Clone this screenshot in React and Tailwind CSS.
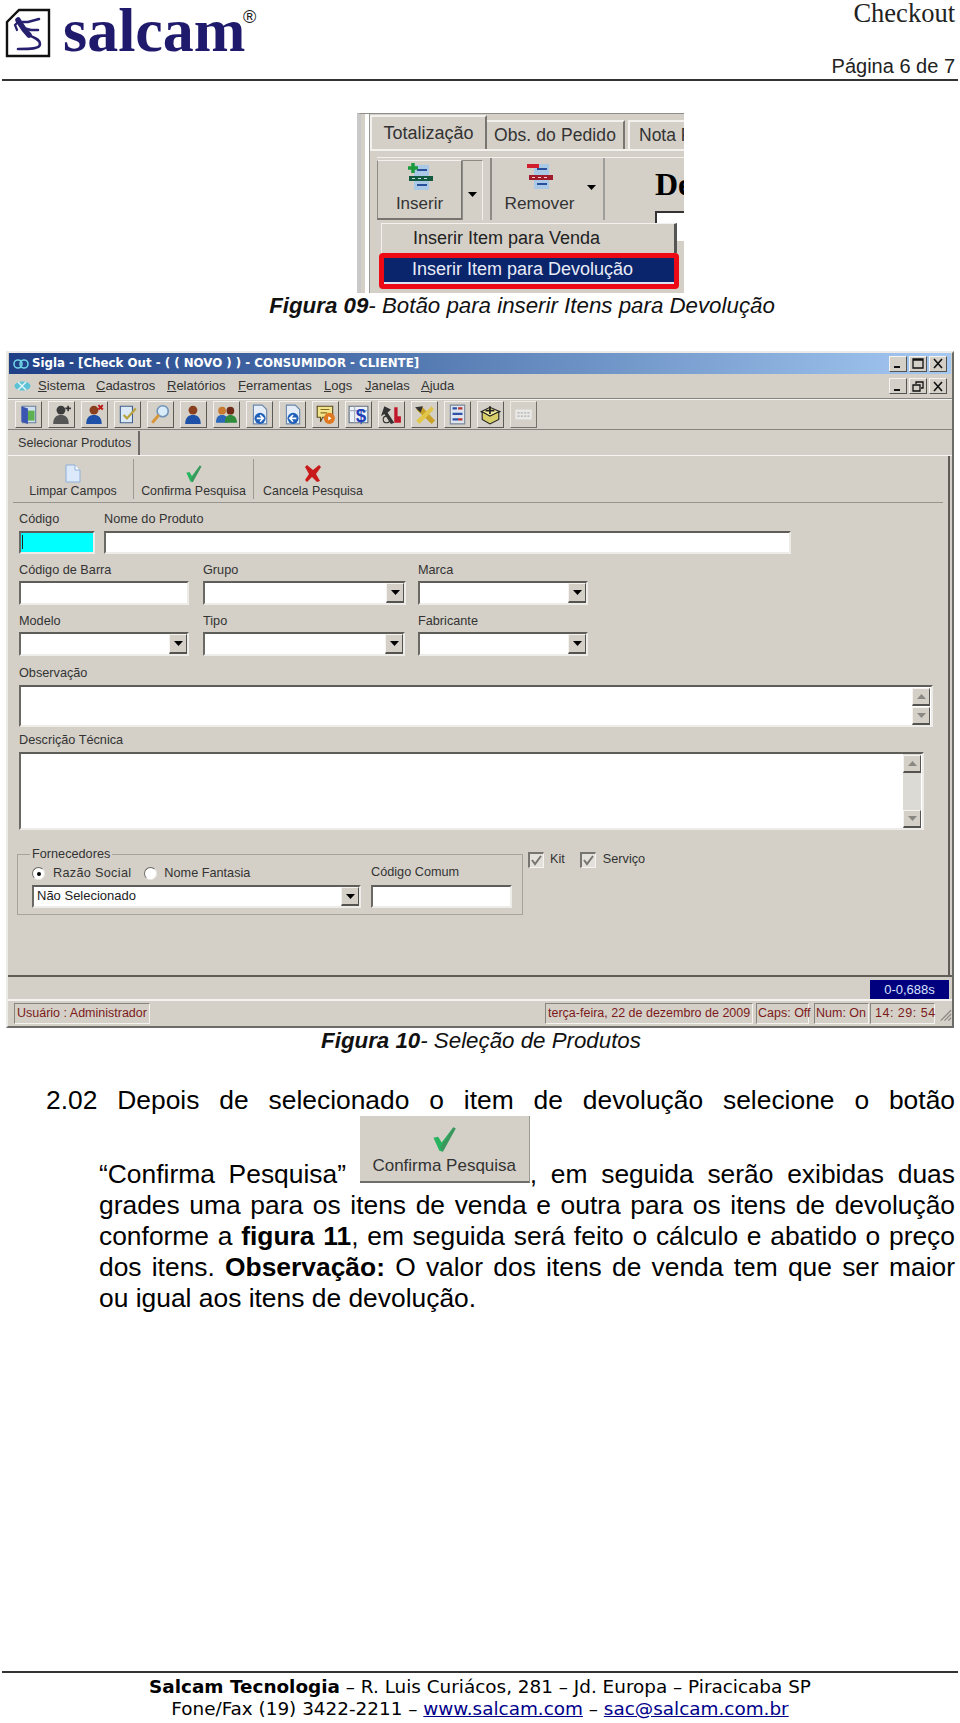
import React from 'react';

const ui = "font-['Liberation_Sans',sans-serif]";

// sunken win32 field
const Field = ({ className = '', children }) => (
  <div className={`flex bg-white border-t-2 border-l-2 border-t-[#5f5d58] border-l-[#6b6964] border-r-2 border-b-2 border-r-[#eeece8] border-b-[#eeece8] ${className}`}>
    {children}
  </div>
);

const Arrow = ({ up, color = '#000' }) => (
  <svg width="9" height="5" viewBox="0 0 9 5">
    <path d={up ? 'M4.5 0L9 5H0z' : 'M0 0h9L4.5 5z'} fill={color} />
  </svg>
);

const SmallBtn = ({ className = '', up, color }) => (
  <div className={`flex items-center justify-center bg-[#d4d0c8] border border-t-[#f4f3f0] border-l-[#f4f3f0] border-r-[#55534f] border-b-[#55534f] border-b-2 ${className}`}>
    <Arrow up={up} color={color} />
  </div>
);

const Combo = ({ className = '', text }) => (
  <Field className={`justify-between items-stretch ${className}`}>
    <span className="pl-[3px] text-[13px] leading-[18px] text-[#222]">{text}</span>
    <SmallBtn className="w-[18px]" />
  </Field>
);

const Label = ({ className = '', children }) => (
  <div className={`text-[12.7px] leading-[15px] text-[#333] ${className}`}>{children}</div>
);

const Caption = ({ bold, rest, className = '' }) => (
  <p className={`text-center text-[22.3px] leading-[24px] italic text-[#111] ${className}`}>
    <b>{bold}</b>
    {rest}
  </p>
);

const Logo = () => (
  <div className="flex items-start">
    <svg width="46" height="50" viewBox="0 0 46 50" className="mt-[8px] ml-[5px]">
      <path d="M14 2H44V48H2V14z" fill="#fff" stroke="#111" strokeWidth="2.4" />
      <g fill="none" stroke="#26206f" strokeLinecap="round">
        <path d="M13 12C16 17 18 21 24 27" strokeWidth="5.5" />
        <path d="M24 27C29 30 35 31 35 36C35 41 25 41 13 41" strokeWidth="2.6" />
        <path d="M14 14L23 14L34 11" strokeWidth="2.6" />
        <path d="M18 20L26 22L33 22" strokeWidth="2.6" />
        <path d="M13 14L10 17L12 22" strokeWidth="2.2" />
      </g>
    </svg>
    <div className="relative ml-[12px] mt-[-1px] font-['Liberation_Serif',serif] font-bold text-[62px] leading-[62px] text-[#1f1a6c]">
      salcam
      <span className="absolute left-[180px] top-[9px] font-['Liberation_Sans',sans-serif] font-normal text-[18px] leading-[18px] text-[#222]">®</span>
    </div>
  </div>
);

const ToolIcon = ({ children, disabled }) => (
  <div className={`flex items-center justify-center w-[27px] h-[27px] bg-[#d4d0c8] border border-t-[#f2f1ed] border-l-[#f2f1ed] border-r-[#5c5a55] border-b-[#5c5a55] ${disabled ? 'opacity-80' : ''}`}>
    <svg width="21" height="21" viewBox="0 0 19 19">{children}</svg>
  </div>
);

const person = (a, b) => (
  <>
    <circle cx="9" cy="5.5" r="4" fill={a} />
    <path d="M2 18c0-6 3-8 7-8s7 2 7 8z" fill={b} />
  </>
);

const toolIcons = [
  <><path d="M4 2h12v15H4z" fill="#cfe0ee" stroke="#6a7f9c" /><path d="M9 6h6v9H9z" fill="#5fb04f" /><path d="M3 2l6 2v14l-6-2z" fill="#3a56b0" /></>,
  <>{person('#3c3c3c', '#555')}<path d="M13 4h5M15.5 1.5v5" stroke="#333" strokeWidth="1.5" /></>,
  <>{person('#8a3f1e', '#1f50a8')}<path d="M13 1l4 4M17 1l-4 4" stroke="#c01818" strokeWidth="1.8" /></>,
  <><path d="M3 2h11v15H3z" fill="#dbe8f5" stroke="#41608f" /><path d="M6 10l3 3 8-9" fill="none" stroke="#b7a23b" strokeWidth="2" /></>,
  <><circle cx="11.5" cy="6.5" r="5" fill="#d9ecfa" stroke="#6f93b8" strokeWidth="1.4" /><path d="M8 10l-6 7" stroke="#d8963a" strokeWidth="2.6" /></>,
  <>{person('#8a3f1e', '#1f50a8')}</>,
  <><circle cx="5.5" cy="6" r="3.5" fill="#c87a30" /><path d="M0 17c0-5 2-7 5.5-7S11 12 11 17z" fill="#2b66b8" /><circle cx="13" cy="6" r="3.5" fill="#6e2c18" /><path d="M8 17c0-5 2-7 5-7s6 2 6 7z" fill="#2f8a3c" /></>,
  <><path d="M4 1h8l4 4v13H4z" fill="#e5eef8" stroke="#6a87aa" /><circle cx="10" cy="13" r="5" fill="#1f5fb8" /><path d="M7 13h6M10 10l3 3-3 3" stroke="#fff" strokeWidth="1.4" fill="none" /></>,
  <><path d="M4 1h8l4 4v13H4z" fill="#e5eef8" stroke="#6a87aa" /><circle cx="10" cy="13" r="5" fill="#1f5fb8" /><path d="M13 13H7M10 10l-3 3 3 3" stroke="#fff" strokeWidth="1.4" fill="none" /></>,
  <><path d="M2 2h14v10H7l-2 4v-4H2z" fill="#f2e48a" stroke="#5a4a20" /><path d="M5 5h8M5 8h6" stroke="#8a6a20" /><circle cx="13" cy="13" r="5" fill="#e07820" /><path d="M12 11l3 2-3 2z" fill="#fff" /></>,
  <><path d="M1 2h17v15H1z" fill="#eef2f6" stroke="#5f6f80" /><path d="M1 6h17M6 2v15" stroke="#9fb0c0" /><text x="7" y="16" fontSize="17" fontWeight="700" fill="#2040b8" fontFamily="Liberation Sans">$</text></>,
  <><path d="M3 2l6 3-3 3 6 9-3 1-6-9-3 2z" fill="#333" /><path d="M12 3h3v8h3v6h-6z" fill="#c0182a" /><circle cx="5" cy="14" r="3" fill="none" stroke="#333" /></>,
  <><path d="M2 5l5-3 12 13-3 3z" fill="#c9a227" /><path d="M16 2l2 3L5 18l-3-3z" fill="#e2c64a" /><path d="M1 3l7-1-2 6z" fill="#333" /></>,
  <><path d="M3 1h13v17H3z" fill="#dfe5ee" stroke="#7a8798" /><path d="M5 4h4M5 9h9M5 14h5" stroke="#2d52a8" strokeWidth="2" /><path d="M10 4h4M10 14h4" stroke="#b53030" strokeWidth="2" /></>,
  <><path d="M1 7l8-4 9 4-9 4z" fill="#f2eb9a" stroke="#222" /><path d="M2 7v7l7 4 8-4V7l-8 4z" fill="#d8cf6a" stroke="#222" /><path d="M9 2v7M5 6h8" stroke="#222" strokeWidth="1.6" /></>,
];

const Check = ({ size = 24 }) => (
  <svg width={size} height={size} viewBox="0 0 24 24">
    <path d="M3 11l4-1 3 5L20 2l2 1-11 20-3-1z" fill="#27b35f" />
    <path d="M9 19L20 2l2 1-11 20z" fill="#4f7f5c" opacity=".55" />
  </svg>
);

const Checkbox = () => (
  <div className="flex items-center justify-center w-[16px] h-[16px] bg-[#e4e1dc] border-t-2 border-l-2 border-t-[#77756f] border-l-[#77756f] border-r border-b border-r-[#f4f3f0] border-b-[#f4f3f0]">
    <svg width="11" height="11" viewBox="0 0 11 11"><path d="M1 5l3 4 6-8" fill="none" stroke="#77756f" strokeWidth="2" /></svg>
  </div>
);

const Radio = ({ on }) => (
  <div className="flex items-center justify-center w-[13px] h-[13px] rounded-full bg-white border border-t-[#6a6864] border-l-[#6a6864] border-r-[#eceae6] border-b-[#eceae6]">
    {on && <div className="w-[4px] h-[4px] rounded-full bg-black" />}
  </div>
);

const StatusCell = ({ className = '', children }) => (
  <div className={`flex items-center h-[21px] border-l border-t border-l-[#87857f] border-t-[#87857f] border-r border-b border-r-[#f4f3f0] border-b-[#f4f3f0] text-[12.5px] leading-[15px] text-[#7c1a1a] whitespace-nowrap ${className}`}>
    {children}
  </div>
);

const WinBtn = ({ children }) => (
  <div className="flex items-center justify-center w-[18px] h-[16px] bg-[#d4d0c8] border border-t-[#f4f3f0] border-l-[#f4f3f0] border-r-[#55534f] border-b-[#55534f]">
    <svg width="12" height="11" viewBox="0 0 12 11" fill="none" stroke="#111" strokeWidth="1.3">{children}</svg>
  </div>
);

const ActionBtn = ({ width, icon, text, sep = true }) => (
  <div className={`flex flex-col items-center justify-end h-[40px] ${width} ${sep ? 'border-r border-r-[#9c9a94]' : ''}`}>
    {icon}
    <span className="text-[12.4px] leading-[15px] text-[#333] mt-[1px] whitespace-nowrap">{text}</span>
  </div>
);

const SiglaWindow = () => (
  <div className={`${ui} ml-[6px] h-[677px] w-[948px] flex flex-col bg-[#d4d0c8] border-2 border-t-[#ecebe7] border-l-[#ecebe7] border-r-[#6d6b67] border-b-[#6d6b67]`}>
    {/* title */}
    <div className="h-[21px] mx-px flex items-center justify-between bg-gradient-to-r from-[#1f3f86] via-[#5d83b9] to-[#a5c9f2] pl-[4px] pr-[4px]">
      <div className="flex items-center gap-[3px]">
        <svg width="16" height="10" viewBox="0 0 16 10" fill="none" stroke="#6fd2e6" strokeWidth="1.6"><ellipse cx="5" cy="5" rx="4" ry="4" /><ellipse cx="11" cy="5" rx="4" ry="4" /></svg>
        <span className="font-['DejaVu_Sans',sans-serif] font-bold text-[11.8px] text-white whitespace-nowrap">Sigla - [Check Out -  ( ( NOVO ) )  - CONSUMIDOR - CLIENTE]</span>
      </div>
      <div className="flex gap-[2px]">
        <WinBtn><path d="M2 9h6" strokeWidth="2" /></WinBtn>
        <WinBtn><path d="M1 1h10v9H1zM1 2h10" /></WinBtn>
        <WinBtn><path d="M2 1l8 9M10 1l-8 9" strokeWidth="1.6" /></WinBtn>
      </div>
    </div>
    {/* menu */}
    <div className="h-[25px] flex items-center justify-between pl-[6px] pr-[5px] border-b border-b-[#85837e]">
      <div className="flex items-center text-[13px] text-[#333]">
        <svg width="17" height="10" viewBox="0 0 17 10" className="mr-[7px]"><ellipse cx="8.5" cy="5" rx="8" ry="4.5" fill="#5cc3d6" /><path d="M4 1l8 8M12 1L4 9" stroke="#e5f5f7" strokeWidth="1.5" /></svg>
        <span className="w-[58px]"><u>S</u>istema</span>
        <span className="w-[71px]"><u>C</u>adastros</span>
        <span className="w-[71px]"><u>R</u>elatórios</span>
        <span className="w-[86px]"><u>F</u>erramentas</span>
        <span className="w-[41px]"><u>L</u>ogs</span>
        <span className="w-[56px]"><u>J</u>anelas</span>
        <span><u>A</u>juda</span>
      </div>
      <div className="flex gap-[2px]">
        <WinBtn><path d="M2 9h6" strokeWidth="2" /></WinBtn>
        <WinBtn><path d="M1 4h7v6H1zM4 3V1h7v6H9" /></WinBtn>
        <WinBtn><path d="M2 1l8 9M10 1l-8 9" strokeWidth="1.6" /></WinBtn>
      </div>
    </div>
    {/* toolbar */}
    <div className="h-[31px] flex items-center gap-[6px] pl-[7px] border-t border-t-[#f4f3f0] border-b border-b-[#85837e]">
      {toolIcons.map((icon, i) => <ToolIcon key={i}>{icon}</ToolIcon>)}
      <ToolIcon disabled><path d="M2 5h15v9H2z" fill="#eee" /><path d="M4 8h11M4 11h11" stroke="#aaa" strokeDasharray="2 1" /></ToolIcon>
    </div>
    {/* tab */}
    <div className="h-[26px] flex items-end border-b border-b-[#f6f5f2]">
      <div className="w-[131px] h-[24px] ml-px flex items-center pl-[9px] border-r-2 border-r-[#6d6b67] text-[12.6px] text-[#333] whitespace-nowrap">Selecionar Produtos</div>
    </div>
    {/* panel */}
    <div className="flex-1 flex flex-col mr-[2px] border-r-2 border-r-[#5f5d58]">
      <div className="mx-[5px] h-[47px] flex items-end pb-[3px] border-b border-b-[#96948e]">
        <ActionBtn width="w-[121px]" icon={
          <svg width="16" height="19" viewBox="0 0 16 19"><path d="M1 1h9l5 5v12H1z" fill="#dbe9fa" stroke="#8fb0d8" /><path d="M10 1v5h5" fill="#fff" stroke="#8fb0d8" /></svg>
        } text="Limpar Campos" />
        <ActionBtn width="w-[120px]" icon={<Check size={19} />} text="Confirma Pesquisa" />
        <ActionBtn width="w-[118px]" sep={false} icon={
          <svg width="18" height="19" viewBox="0 0 18 19"><path d="M3 1l6 5 6-5 2 2-5 7 4 7-3 1-5-5-5 5-2-2 4-6-4-7z" fill="#c81a1a" /></svg>
        } text="Cancela Pesquisa" />
      </div>

      <div className="pl-[11px] pt-[9px]">
        <div className="flex">
          <div className="w-[85px]">
            <Label>Código</Label>
            <Field className="mt-[4px] w-[76px] h-[23px] !bg-[#00ffff]"><div className="ml-[1px] mt-[2px] w-px h-[14px] bg-[#222]" /></Field>
          </div>
          <div>
            <Label>Nome do Produto</Label>
            <Field className="mt-[4px] w-[687px] h-[23px]" />
          </div>
        </div>
        <div className="flex mt-[9px]">
          <div className="w-[184px]">
            <Label>Código de Barra</Label>
            <Field className="mt-[3px] w-[170px] h-[24px]" />
          </div>
          <div className="w-[215px]">
            <Label>Grupo</Label>
            <Combo className="mt-[3px] w-[203px] h-[24px]" />
          </div>
          <div>
            <Label>Marca</Label>
            <Combo className="mt-[3px] w-[170px] h-[24px]" />
          </div>
        </div>
        <div className="flex mt-[9px]">
          <div className="w-[184px]">
            <Label>Modelo</Label>
            <Combo className="mt-[3px] w-[170px] h-[24px]" />
          </div>
          <div className="w-[215px]">
            <Label>Tipo</Label>
            <Combo className="mt-[3px] w-[202px] h-[24px]" />
          </div>
          <div>
            <Label>Fabricante</Label>
            <Combo className="mt-[3px] w-[170px] h-[24px]" />
          </div>
        </div>
        <Label className="mt-[10px]">Observação</Label>
        <Field className="mt-[4px] w-[914px] h-[42px] justify-end">
          <div className="w-[18px] flex flex-col gap-[1px] pt-[1px] mr-[1px]">
            <SmallBtn className="h-[18px]" up color="#8a8882" />
            <SmallBtn className="h-[18px]" color="#8a8882" />
          </div>
        </Field>
        <Label className="mt-[6px]">Descrição Técnica</Label>
        <Field className="mt-[4px] w-[905px] h-[78px] justify-end">
          <div className="w-[18px] flex flex-col bg-[#dcdad5] pt-[1px] mr-[1px]">
            <SmallBtn className="h-[18px]" up color="#8a8882" />
            <div className="flex-1" />
            <SmallBtn className="h-[18px]" color="#8a8882" />
          </div>
        </Field>
        <div className="flex mt-[18px] ml-[-2px]">
          <fieldset className="w-[506px] h-[67px] pl-[14px] pr-[10px] border border-[#a7a49e]">
            <legend className="ml-[-2px] px-[2px] text-[12.7px] leading-[13px] text-[#333]">Fornecedores</legend>
            <div className="flex">
              <div className="w-[339px]">
                <div className="flex items-center text-[12.7px] leading-[15px] text-[#333] mt-[5px]">
                  <Radio on />
                  <span className="ml-[8px] tracking-[0.3px]">Razão Social</span>
                  <div className="ml-[13px]"><Radio /></div>
                  <span className="ml-[7px]">Nome Fantasia</span>
                </div>
                <Combo className="mt-[4px] w-[329px] h-[23px]" text="Não Selecionado" />
              </div>
              <div className="mt-[4px]">
                <Label>Código Comum</Label>
                <Field className="mt-[5px] w-[141px] h-[23px]" />
              </div>
            </div>
          </fieldset>
          <div className="flex items-center h-[16px] mt-[4px] ml-[5px] text-[12.7px] text-[#333]">
            <Checkbox />
            <span className="ml-[6px]">Kit</span>
            <div className="ml-[15px]"><Checkbox /></div>
            <span className="ml-[7px]">Serviço</span>
          </div>
        </div>
      </div>
    </div>
    {/* status bars */}
    <div className="h-[26px] flex justify-end items-start pt-[3px] pr-[3px] border-t-2 border-t-[#5f5d58] border-b-2 border-b-[#f4f3f0]">
      <div className="w-[79px] h-[19px] flex items-center justify-center bg-[#00007e] text-[#d8e4ff] text-[13px]">0-0,688s</div>
    </div>
    <div className="h-[25px] flex items-start justify-between pl-[6px] pt-[2px]">
      <StatusCell className="w-[136px] pl-[2px]">Usuário : Administrador</StatusCell>
      <div className="flex items-center">
        <StatusCell className="w-[208px] pl-[2px]">terça-feira, 22 de dezembro de 2009</StatusCell>
        <StatusCell className="w-[53px] ml-[3px] pl-[1px]">Caps: Off</StatusCell>
        <StatusCell className="w-[55px] ml-[5px] pl-[1px]">Num: On</StatusCell>
        <StatusCell className="w-[65px] ml-[1px] pl-[4px] tracking-[0.5px]">14: 29: 54</StatusCell>
        <svg width="15" height="16" viewBox="0 0 16 16" stroke="#8a8882" strokeWidth="1.3" className="ml-[2px]"><path d="M15 4L4 15M15 8l-7 7M15 12l-3 3" /></svg>
      </div>
    </div>
  </div>
);

// figure 09 crop, blown up from a small screenshot
const InsertFigure = () => (
  <div className={`${ui} relative ml-[357px] w-[327px] h-[180px] overflow-hidden bg-[#d4d0c8] border-l-[4px] border-l-[#c9c9c9] border-t border-t-[#8f8d88]`}>
    <div className="absolute left-[4px] top-0 bottom-0 w-[5px] bg-white border-r border-r-[#9a9892]" />
    <div className="ml-[9px] flex items-end h-[37px] border-b-2 border-b-[#f2f1ed]">
      <div className="w-[117px] h-[34px] shrink-0 flex items-center justify-center border-t-2 border-l-2 border-r-2 border-t-[#f2f1ed] border-l-[#f2f1ed] border-r-[#77756f] text-[18px] text-[#333]">Totalização</div>
      <div className="w-[138px] h-[29px] shrink-0 flex items-center justify-center border-t-2 border-r-2 border-t-[#f2f1ed] border-r-[#77756f] text-[17.5px] tracking-[0.1px] text-[#333]">Obs. do Pedido</div>
      <div className="ml-[3px] h-[29px] pl-[9px] border-t-2 border-l-2 border-t-[#f2f1ed] border-l-[#f2f1ed] flex-1 text-[17.5px] leading-[27px] text-[#333] whitespace-nowrap overflow-hidden">Nota F</div>
    </div>
    <div className="ml-[16px] mt-[6px] flex h-[63px] border-t border-t-[#f2f1ed]">
      <div className="w-[85px] h-[60px] mt-[2px] shrink-0 flex flex-col items-center border border-t-[#f2f1ed] border-l-[#8d8b86] border-b-2 border-r-[#77756f] border-b-[#77756f]">
        <svg width="30" height="27" viewBox="0 0 30 27" className="mt-[2px]">
          <path d="M9 2h15v25H9z" fill="#a9c9e6" /><path d="M12 7h10M12 22h10" stroke="#274f9a" strokeWidth="2" />
          <path d="M4 13h24v5H4z" fill="#11593f" /><path d="M7 15.5h3M13 15.5h3M19 15.5h3" stroke="#cde" />
          <path d="M8 0v10M3 5h10" stroke="#1d9a3b" strokeWidth="3.5" />
        </svg>
        <span className="text-[17px] leading-[28px] text-[#333]">Inserir</span>
      </div>
      <div className="w-[21px] shrink-0 pt-[8px] flex items-center justify-center mt-[2px] border-t border-r border-l border-t-[#8d8b86] border-l-[#8d8b86] border-r-[#f2f1ed]"><Arrow /></div>
      <div className="w-[115px] shrink-0 ml-[7px] flex border-l-2 border-r-2 border-l-[#8d8b86] border-r-[#a09e98]">
        <div className="flex-1 flex flex-col items-center pl-[8px]">
          <svg width="30" height="27" viewBox="0 0 30 27" className="mt-[4px]">
            <path d="M9 2h15v25H9z" fill="#a9c9e6" /><path d="M12 7h10M12 22h10" stroke="#274f9a" strokeWidth="2" />
            <path d="M4 13h24v5H4z" fill="#a11c2b" /><path d="M7 15.5h3M13 15.5h3M19 15.5h3" stroke="#fcc" />
            <path d="M2 4h12" stroke="#d21f2e" strokeWidth="4" />
          </svg>
          <span className="text-[17.3px] leading-[28px] text-[#333]">Remover</span>
        </div>
        <div className="w-[24px] flex items-center justify-center pb-[4px]"><Arrow /></div>
      </div>
      <div className="ml-[50px] shrink-0 pt-[8px]">
        <div className="font-['Liberation_Serif',serif] font-bold text-[32px] leading-[36px] text-black whitespace-nowrap">De</div>
        <div className="w-[40px] h-[30px] bg-white border-t-2 border-l-2 border-t-[#333] border-l-[#333] mt-[9px]" />
      </div>
    </div>
    {/* dropdown menu lying over the tab content */}
    <div className="absolute left-[18px] top-[109px] w-[300px] flex flex-col">
      <div className="h-[30px] w-[296px] ml-[2px] bg-[#d4d0c8] flex items-center pl-[31px] border-t border-l border-t-[#f2f1ed] border-l-[#f2f1ed] border-r-[3px] border-r-[#555] text-[18px] text-[#222]">Inserir Item para Venda</div>
      <div className="h-[36px] bg-[#0a256b] flex items-center pl-[28px] pb-[3px] border-[5px] border-[#ee0a14] rounded-[4px] text-[18px] text-[#e8ecf8] shadow-[inset_0_-2px_0_0_#dfe4f2]">Inserir Item para Devolução</div>
    </div>
  </div>
);

const Paragraph = () => (
  <div className={`${ui} ml-[46px] mr-[5px] text-[26.4px] leading-[31px] text-black text-justify`}>
    <p className="[text-align-last:justify]">2.02 Depois de selecionado o item de devolução selecione o botão</p>
    <p className="pl-[53px]">
      “Confirma Pesquisa”{' '}
      <span className="inline-block overflow-hidden w-[170px] h-[67px] align-baseline bg-[#d4d0c8] border-b-2 border-b-[#6f6d68] border-r border-r-[#9c9a94]">
        <span className="flex flex-col items-center pt-[9px]">
          <Check size={28} />
          <span className="text-[17px] leading-[18px] text-[#333] mt-[4px] whitespace-nowrap">Confirma Pesquisa</span>
        </span>
      </span>
      , em seguida serão exibidas duas grades uma para os itens de venda e outra para os itens de devolução conforme a <b>figura 11</b>, em seguida será feito o cálculo e abatido o preço dos itens. <b>Observação:</b> O valor dos itens de venda tem que ser maior ou igual aos itens de devolução.
    </p>
  </div>
);

export default function App() {
  return (
    <div className="w-[960px] h-[1723px] bg-white flex flex-col overflow-hidden">
      <header className="h-[81px] mx-[2px] border-b-2 border-b-[#333] flex justify-between">
        <div className="ml-[-2px]"><Logo /></div>
        <div className={`flex flex-col items-end pr-[3px] ${ui}`}>
          <div className="font-['Liberation_Serif',serif] text-[26.5px] leading-[27px] text-[#222]">Checkout</div>
          <div className="mt-[29px] text-[20px] leading-[20px] text-[#222]">Página 6 de 7</div>
        </div>
      </header>
      <div className="mt-[32px]"><InsertFigure /></div>
      <Caption bold="Figura 09" rest="- Botão para inserir Itens para Devolução" className={`${ui} mt-[1px] ml-[84px]`} />
      <div className="mt-[33px]"><SiglaWindow /></div>
      <Caption bold="Figura 10" rest="- Seleção de Produtos" className={`${ui} mt-[1px] ml-[2px]`} />
      <div className="mt-[32px]"><Paragraph /></div>
      <div className="flex-1" />
      <footer className="h-[52px] mx-[2px] border-t-2 border-t-[#333] pt-[3px] text-center font-['DejaVu_Sans',sans-serif] text-[18.4px] leading-[22px] text-black">
        <div><b>Salcam Tecnologia</b> – R. Luis Curiácos, 281 – Jd. Europa – Piracicaba SP</div>
        <div>Fone/Fax (19) 3422-2211 – <a className="text-[#00008b] underline" href="#a">www.salcam.com</a> – <a className="text-[#00008b] underline" href="#b">sac@salcam.com.br</a></div>
      </footer>
    </div>
  );
}
